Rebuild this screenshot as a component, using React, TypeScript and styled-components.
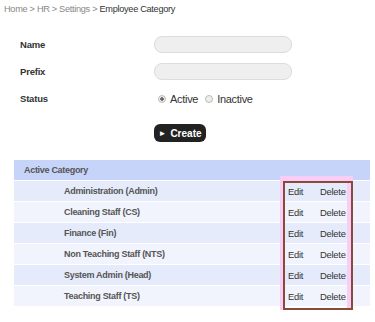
import styled, { createGlobalStyle } from 'styled-components'

const Global = createGlobalStyle`
  body {
    margin: 0;
    background: #fff;
    font-family: "Liberation Sans", Arial, sans-serif;
  }
`

const Page = styled.div`
  width: 375px;
  height: 322px;
  overflow: hidden;
`

const Crumbs = styled.div`
  height: 18px;
  line-height: 18px;
  padding-left: 4px;
  font-size: 9.2px;
  letter-spacing: -0.3px;
  color: #888;
`

const Current = styled.span`
  color: #333;
`

const Form = styled.div`
  margin-top: 13px;
  padding-left: 20px;
  display: grid;
  grid-template-columns: 134px 1fr;
  grid-auto-rows: 27px;
  align-items: center;
`

const Label = styled.div`
  font-size: 9.5px;
  letter-spacing: -0.2px;
  font-weight: bold;
  color: #333;
`

const Field = styled.div`
  width: 136px;
  height: 15px;
  border: 1px solid #dcdcdc;
  border-radius: 8px;
  background: #efefef;
`

const Radios = styled.div`
  display: flex;
  align-items: center;
  padding-left: 1px;
  font-size: 11px;
  letter-spacing: -0.3px;
  color: #333;
`

const Radio = styled.span<{ $on?: boolean }>`
  width: 6px;
  height: 6px;
  border-radius: 50%;
  border: 1px solid #bbb;
  background: ${p => (p.$on ? 'radial-gradient(circle, #666 0 1.5px, #eee 2px)' : '#eee')};
  margin: 0 4px 0 3px;
  margin-left: ${p => (p.$on ? '3px' : '7px')};
`

const Actions = styled.div`
  margin-top: 12px;
  padding-left: 154px;
`

const Button = styled.div`
  width: 52px;
  height: 18px;
  border-radius: 6px;
  background: #222;
  color: #fff;
  font-size: 10px;
  font-weight: bold;
  display: flex;
  align-items: center;
  justify-content: center;
  gap: 4px;
`

const Arrow = styled.span`
  font-size: 8px;
`

const Table = styled.div`
  position: relative;
  margin: 18px 0 0 14px;
  width: 356px;
`

const Head = styled.div`
  height: 20px;
  line-height: 20px;
  background: #c7d4f9;
  padding-left: 10px;
  font-size: 9px;
  letter-spacing: -0.3px;
  font-weight: bold;
  color: #555;
`

const Row = styled.div<{ $alt: boolean }>`
  height: 20px;
  border-top: 1px solid #fff;
  display: grid;
  grid-template-columns: 274px 32px 1fr;
  align-items: center;
  font-size: 9.4px;
  letter-spacing: -0.25px;
  background: ${p => (p.$alt ? '#f1f4fd' : '#e5ebfb')};
`

const Name = styled.div`
  padding-left: 50px;
  font-size: 9px;
  letter-spacing: -0.3px;
  font-weight: bold;
  color: #555;
`

const Link = styled.div`
  color: #333;
`

const Glow = styled.div`
  position: absolute;
  left: 266px;
  top: 16px;
  width: 73px;
  height: 134px;
  box-sizing: border-box;
  border-top: 5px solid #f8cdf6;
  border-left: 3px solid #f8cdf6;
  pointer-events: none;
`

const Frame = styled.div`
  height: 100%;
  box-sizing: border-box;
  border: 2px solid #8a4a3a;
  display: flex;
  justify-content: flex-end;
`

const Stripe = styled.div`
  width: 4px;
  background: #f8cdf6;
`

const categories = [
  'Administration (Admin)',
  'Cleaning Staff (CS)',
  'Finance (Fin)',
  'Non Teaching Staff (NTS)',
  'System Admin (Head)',
  'Teaching Staff (TS)'
]

export default function App () {
  return (
    <Page>
      <Global />
      <Crumbs>
        Home &gt; HR &gt; Settings &gt; <Current>Employee Category</Current>
      </Crumbs>
      <Form>
        <Label>Name</Label>
        <Field />
        <Label>Prefix</Label>
        <Field />
        <Label>Status</Label>
        <Radios>
          <Radio $on />Active<Radio />Inactive
        </Radios>
      </Form>
      <Actions>
        <Button><Arrow>►</Arrow>Create</Button>
      </Actions>
      <Table>
        <Head>Active Category</Head>
        {categories.map((c, i) => (
          <Row key={c} $alt={i % 2 === 1}>
            <Name>{c}</Name>
            <Link>Edit</Link>
            <Link>Delete</Link>
          </Row>
        ))}
        <Glow>
          <Frame><Stripe /></Frame>
        </Glow>
      </Table>
    </Page>
  )
}
